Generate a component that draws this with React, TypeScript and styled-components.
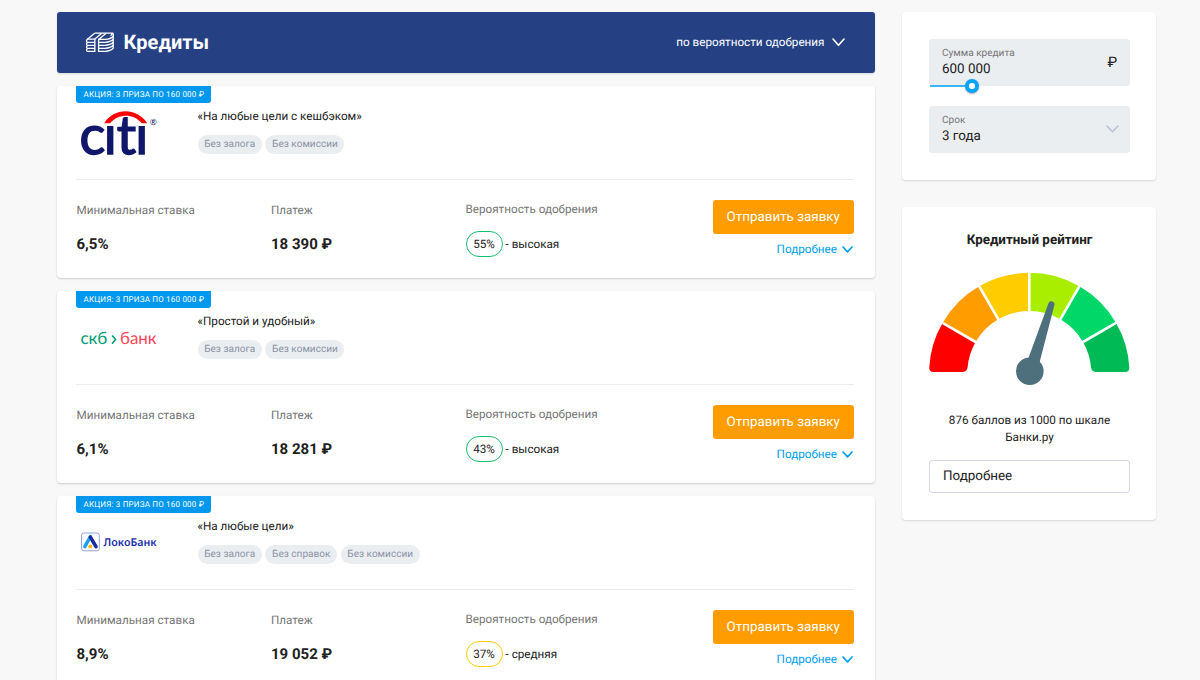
import React, {FunctionComponent, ReactNode} from 'react';
import styled, {createGlobalStyle} from 'styled-components';

interface OfferInterface {
  ID: string;
  logo: ReactNode;
  title: string;
  tags: string[];
  rate: string;
  payment: string;
  chance: number;
  chanceLabel: string;
  chanceColor: string;
}

interface ChevronProps {
  width: number;
  height: number;
  color: string;
  stroke: number;
}

const Chevron: FunctionComponent<ChevronProps> = ({width, height, color, stroke}) => (
  <svg width={width} height={height} viewBox={`0 0 ${width} ${height}`} fill="none">
    <path
      d={`M1 1L${width / 2} ${height - 1.2}L${width - 1} 1`}
      stroke={color}
      strokeWidth={stroke}
      strokeLinecap="round"
      strokeLinejoin="round"
    />
  </svg>
);

const MoneyIcon: FunctionComponent = () => (
  <svg width="30" height="21" viewBox="0 0 30 21" fill="none" stroke="#fff" strokeWidth="1.3" strokeLinejoin="round" strokeLinecap="round">
    <path d="M2.4 7.2L9 1.7Q9.6 1.2 10.4 1.2H27.7L26 3.4" />
    <path d="M2.4 7.2H9.6L16.4 1.6M13.6 7.6L20.8 1.6M13.6 7.4H20C24 7.2 26.8 5.8 28.2 4.2V1.3" />
    <path d="M9.8 7.3V19.4M13.6 7.5V19.4" />
    <path d="M2.4 7.4C1.2 8.2 1.2 9.7 2.4 10.4H9.6M2.4 10.6C1.2 11.4 1.2 12.8 2.4 13.4H9.6M2.4 13.6C1.2 14.4 1.2 15.8 2.4 16.4H9.6M2.4 16.6C1.2 17.4 1.2 18.8 2.4 19.4H9.6" />
    <path d="M13.8 10.4H20C24 10.2 26.8 8.9 28.2 7.3M13.8 13.4H20C24 13.2 26.8 11.9 28.2 10.3M13.8 16.4H20C24 16.2 26.8 14.9 28.2 13.3M13.8 19.4H20C24 19.2 26.8 17.9 28.2 16.3V4.2" />
  </svg>
);

const CitiLogo: FunctionComponent = () => (
  <svg width="82" height="72" viewBox="0 -11 82 72">
    <CitiText x="2.4 26.8 39.8 58.2" y="43.6">
      citi
    </CitiText>
    {/* the arc stands in for the dots of both letters */}
    <path d="M24 0H40V14.8H24ZM57.4 0H72V14.8H57.4Z" fill="#fff" />
    <path d="M27.2 13.2C37 -2.6 60 -2.6 70.2 13.2H64.8C56 3.4 42 3.4 33 13.2Z" fill="#fe0002" />
    <LogoText x="72.8" y="15" fontSize="8.5" fill="#10176b">
      ®
    </LogoText>
  </svg>
);

const SkbLogo: FunctionComponent = () => (
  <svg width="82" height="30" viewBox="0 -4 82 30">
    <LogoText x="3.4" y="15.4" fontSize="17" textLength="27" lengthAdjust="spacingAndGlyphs" fill="#009b77">
      скб
    </LogoText>
    <path d="M35 6.4L38.6 10.6L35 14.8" fill="none" stroke="#009b77" strokeWidth="1.6" />
    <LogoText x="43" y="15.4" fontSize="17" textLength="36.6" lengthAdjust="spacingAndGlyphs" fill="#fb4657">
      банк
    </LogoText>
  </svg>
);

const LokoLogo: FunctionComponent = () => (
  <svg width="82" height="26" viewBox="0 0 82 26">
    <rect x="4.5" y="1" width="17.8" height="17.8" rx="2.4" fill="#fff" stroke="#8fa4df" />
    <path d="M7.8 14.6L13.4 4.6" stroke="#1b9df0" strokeWidth="3.4" strokeLinecap="round" />
    <path d="M13.4 5.2L19 14.6" stroke="#1a2b9f" strokeWidth="3.6" strokeLinecap="round" />
    <circle cx="13.3" cy="14.4" r="1.9" fill="#ffb400" />
    <LokoText x="26.6" y="14" textLength="53" lengthAdjust="spacingAndGlyphs">
      ЛокоБанк
    </LokoText>
  </svg>
);

const OFFERS: OfferInterface[] = [
  {
    ID: 'citi',
    logo: <CitiLogo />,
    title: '«На любые цели с кешбэком»',
    tags: ['Без залога', 'Без комиссии'],
    rate: '6,5%',
    payment: '18 390 ₽',
    chance: 55,
    chanceLabel: 'высокая',
    chanceColor: '#17bf6c'
  },
  {
    ID: 'skb',
    logo: <SkbLogo />,
    title: '«Простой и удобный»',
    tags: ['Без залога', 'Без комиссии'],
    rate: '6,1%',
    payment: '18 281 ₽',
    chance: 43,
    chanceLabel: 'высокая',
    chanceColor: '#17bf6c'
  },
  {
    ID: 'loko',
    logo: <LokoLogo />,
    title: '«На любые цели»',
    tags: ['Без залога', 'Без справок', 'Без комиссии'],
    rate: '8,9%',
    payment: '19 052 ₽',
    chance: 37,
    chanceLabel: 'средняя',
    chanceColor: '#ffcb05'
  }
];

const GAUGE_COLORS = ['#ff0000', '#ff9c00', '#ffcc00', '#a9ee00', '#00d769', '#00ba55'];
const GAUGE_CENTER = 101;
const GAUGE_OUTER = 100.2;
const GAUGE_INNER = 62;

function gaugePoint(radius: number, degrees: number) {
  const angle = (degrees * Math.PI) / 180;

  return `${(GAUGE_CENTER - radius * Math.cos(angle)).toFixed(2)} ${(GAUGE_CENTER - radius * Math.sin(angle)).toFixed(2)}`;
}

function gaugeSector(index: number) {
  const from = index * 30;
  const to = from + 30;

  // the outermost sectors have rounded feet
  if (index === 0) {
    return `M${gaugePoint(GAUGE_OUTER, 3)}A${GAUGE_OUTER} ${GAUGE_OUTER} 0 0 1 ${gaugePoint(GAUGE_OUTER, to)}L${gaugePoint(GAUGE_INNER, to)}A${GAUGE_INNER} ${GAUGE_INNER} 0 0 0 ${gaugePoint(GAUGE_INNER, 5)}Q38.6 99.9 34.5 99.9H4.8Q1 99.9 ${gaugePoint(GAUGE_OUTER, 3)}Z`;
  }

  if (index === 5) {
    return `M${gaugePoint(GAUGE_OUTER, from)}A${GAUGE_OUTER} ${GAUGE_OUTER} 0 0 1 ${gaugePoint(GAUGE_OUTER, 177)}Q201 99.9 197.2 99.9H167.5Q163.4 99.9 ${gaugePoint(GAUGE_INNER, 175)}A${GAUGE_INNER} ${GAUGE_INNER} 0 0 0 ${gaugePoint(GAUGE_INNER, from)}Z`;
  }

  return `M${gaugePoint(GAUGE_OUTER, from)}A${GAUGE_OUTER} ${GAUGE_OUTER} 0 0 1 ${gaugePoint(GAUGE_OUTER, to)}L${gaugePoint(GAUGE_INNER, to)}A${GAUGE_INNER} ${GAUGE_INNER} 0 0 0 ${gaugePoint(GAUGE_INNER, from)}Z`;
}

const Gauge: FunctionComponent = () => (
  <svg width="202" height="116" viewBox="0.7 0 202 116">
    {GAUGE_COLORS.map((color, index) => (
      <path key={color} d={gaugeSector(index)} fill={color} />
    ))}
    {[30, 60, 90, 120, 150].map((angle) => (
      <path key={angle} d={`M${gaugePoint(GAUGE_INNER - 2, angle)}L${gaugePoint(GAUGE_OUTER + 2, angle)}`} stroke="#fff" strokeWidth="2.6" />
    ))}
    <path d="M99.8 87L120.1 31.6A3 3 0 0 1 126 33.4L111.1 91Z" fill="#4e707c" />
    <circle cx="101.5" cy="99.2" r="13.8" fill="#4e707c" />
  </svg>
);

const Offer: FunctionComponent<{offer: OfferInterface}> = ({offer}) => (
  <OfferCard>
    <PromoTag>АКЦИЯ: 3 ПРИЗА ПО 160 000 ₽</PromoTag>
    <OfferHead>
      <LogoHolder>{offer.logo}</LogoHolder>
      <OfferInfo>
        <OfferTitle>{offer.title}</OfferTitle>
        <TagList>
          {offer.tags.map((tag) => (
            <Tag key={tag}>{tag}</Tag>
          ))}
        </TagList>
      </OfferInfo>
    </OfferHead>
    <OfferBody>
      <Metric>
        <MetricLabel>Минимальная ставка</MetricLabel>
        <MetricValue>{offer.rate}</MetricValue>
      </Metric>
      <Metric>
        <MetricLabel>Платеж</MetricLabel>
        <MetricValue>{offer.payment}</MetricValue>
      </Metric>
      <ChanceMetric>
        <MetricLabel>Вероятность одобрения</MetricLabel>
        <Chance>
          <ChanceBadge $color={offer.chanceColor}>{offer.chance}%</ChanceBadge>- {offer.chanceLabel}
        </Chance>
      </ChanceMetric>
      <Actions>
        <ApplyButton>Отправить заявку</ApplyButton>
        <DetailsLink>
          Подробнее
          <Chevron width={11} height={7} color="#00a0f0" stroke={1.7} />
        </DetailsLink>
      </Actions>
    </OfferBody>
  </OfferCard>
);

const App: FunctionComponent = () => (
  <>
    <GlobalStyle />
    <Page>
      <Main>
        <Header>
          <MoneyIcon />
          <HeaderTitle>Кредиты</HeaderTitle>
          <SortButton>
            по вероятности одобрения
            <Chevron width={13} height={8.5} color="#fff" stroke={1.6} />
          </SortButton>
        </Header>
        {OFFERS.map((offer) => (
          <Offer key={offer.ID} offer={offer} />
        ))}
      </Main>
      <Aside>
        <FilterPanel>
          <Field>
            <FieldContent>
              <FieldLabel>Сумма кредита</FieldLabel>
              <FieldValue>600 000</FieldValue>
            </FieldContent>
            <Currency>₽</Currency>
            <SliderTrack>
              <SliderThumb />
            </SliderTrack>
          </Field>
          <Field>
            <FieldContent>
              <FieldLabel>Срок</FieldLabel>
              <FieldValue>3 года</FieldValue>
            </FieldContent>
            <Chevron width={13} height={8} color="#b9c0cf" stroke={1.5} />
          </Field>
        </FilterPanel>
        <RatingPanel>
          <RatingTitle>Кредитный рейтинг</RatingTitle>
          <Gauge />
          <RatingText>
            876 баллов из 1000 по шкале
            <br />
            Банки.ру
          </RatingText>
          <RatingButton>Подробнее</RatingButton>
        </RatingPanel>
      </Aside>
    </Page>
  </>
);

export default App;

const GlobalStyle = createGlobalStyle`
  * {
    box-sizing: border-box;
  }

  body {
    margin: 0;
    background: #f8f8f8;
    color: #212121;
    font-family: Roboto, sans-serif;
    text-rendering: geometricPrecision;
    overflow: hidden;
  }

  svg {
    display: block;
    flex: none;
  }

  button {
    font-family: inherit;
    text-rendering: inherit;
  }
`;

const LogoText = styled.text`
  font-family: Lato, sans-serif;
`;

const CitiText = styled(LogoText)`
  font-size: 54px;
  fill: #10176b;
  stroke: #10176b;
  stroke-width: 1.5px;
`;

const LokoText = styled.text`
  font-family: 'Noto Sans', sans-serif;
  font-size: 10.8px;
  font-weight: 600;
  fill: #1a2fae;
`;

const Page = styled.div`
  display: flex;
  align-items: flex-start;
  gap: 27px;
  height: 680px;
  padding: 12px 0 0 57px;
  overflow: hidden;
`;

const Main = styled.main`
  display: flex;
  flex-direction: column;
  gap: 13px;
  width: 818px;
`;

const Header = styled.header`
  display: flex;
  align-items: center;
  height: 61px;
  padding: 0 30.5px 1px 28px;
  border-radius: 3px;
  background: #254184;
  color: #fff;
  box-shadow: 0 1px 2px rgba(0, 0, 0, 0.12);
`;

const HeaderTitle = styled.h1`
  flex: 1;
  margin: 0 0 0 8.5px;
  font-size: 20px;
  font-weight: 700;
  line-height: 26px;
`;

const SortButton = styled.div`
  display: flex;
  align-items: center;
  gap: 7px;
  font-size: 11.7px;
`;

const OfferCard = styled.section`
  display: flex;
  flex-direction: column;
  flex: none;
  height: 192px;
  padding: 0 21px 0 19px;
  border-radius: 4px;
  background: #fff;
  box-shadow: 0 1px 2px rgba(0, 0, 0, 0.18);
`;

const PromoTag = styled.div`
  align-self: flex-start;
  width: 134.5px;
  height: 16.5px;
  padding: 0 7.5px;
  border-radius: 0 0 3px 3px;
  background: #0098ee;
  color: #fff;
  font-size: 8px;
  line-height: 17px;
  letter-spacing: 0.2px;
  white-space: nowrap;
`;

const OfferHead = styled.div`
  display: flex;
  height: 77.5px;
  border-bottom: 1px solid #ececec;
`;

const LogoHolder = styled.div`
  display: flex;
  align-items: center;
  width: 121.5px;
  height: 64px;
  padding-left: 1px;
`;

const OfferInfo = styled.div`
  padding-top: 5.5px;
`;

const OfferTitle = styled.div`
  font-size: 11.7px;
  line-height: 16px;
`;

const TagList = styled.div`
  display: flex;
  gap: 3.5px;
  margin-top: 10.5px;
`;

const Tag = styled.span`
  height: 19.5px;
  padding: 0 6.7px;
  border-radius: 10px;
  background: #ebeef1;
  color: #8a93a6;
  font-size: 10.05px;
  line-height: 19px;
  white-space: nowrap;
`;

const OfferBody = styled.div`
  display: flex;
  padding: 20px 0 0 0.5px;
`;

const Metric = styled.div`
  width: 194.5px;
  padding-top: 1px;
`;

const ChanceMetric = styled(Metric)`
  padding-top: 0;
`;

const MetricLabel = styled.div`
  color: #757575;
  font-size: 11.7px;
  line-height: 18px;
  white-space: nowrap;
`;

const MetricValue = styled.div`
  margin-top: 15px;
  font-size: 15px;
  font-weight: 700;
  line-height: 20px;
`;

const Chance = styled.div`
  display: flex;
  align-items: center;
  gap: 3px;
  margin-top: 13px;
  font-size: 11.7px;
`;

const ChanceBadge = styled.span<{$color: string}>`
  width: 37px;
  height: 26px;
  border: 1px solid ${({$color}) => $color};
  border-radius: 13px;
  font-size: 11.7px;
  line-height: 24px;
  text-align: center;
`;

const Actions = styled.div`
  display: flex;
  flex-direction: column;
  align-items: flex-end;
  margin-left: auto;
`;

const ApplyButton = styled.button`
  width: 141.5px;
  height: 34px;
  padding: 0;
  border: 0;
  border-radius: 3px;
  background: #ff9c00;
  color: #fff;
  font-size: 13.4px;
  white-space: nowrap;
`;

const DetailsLink = styled.div`
  display: flex;
  align-items: center;
  gap: 5px;
  margin: 7px 1px 0 0;
  color: #00a0f0;
  font-size: 11.7px;
  line-height: 16px;
`;

const Aside = styled.aside`
  display: flex;
  flex-direction: column;
  gap: 27px;
  width: 254px;
`;

const Panel = styled.section`
  padding: 27px 26px 27px 27px;
  border-radius: 4px;
  background: #fff;
  box-shadow: 0 1px 2px rgba(0, 0, 0, 0.14);
`;

const FilterPanel = styled(Panel)`
  display: flex;
  flex-direction: column;
  gap: 20.5px;
  height: 168px;
`;

const Field = styled.div`
  position: relative;
  display: flex;
  align-items: center;
  height: 46.5px;
  padding: 0 11px 0 13px;
  border-radius: 3px;
  background: #ebeef1;
`;

const FieldContent = styled.div`
  flex: 1;
  padding-top: 1px;
`;

const FieldLabel = styled.div`
  color: #757575;
  font-size: 10.05px;
  line-height: 14px;
`;

const FieldValue = styled.div`
  font-size: 13.4px;
  line-height: 18px;
`;

const Currency = styled.div`
  margin-right: 2px;
  font-size: 14.5px;
`;

const SliderTrack = styled.div`
  position: absolute;
  left: 1px;
  bottom: -1px;
  width: 36px;
  height: 1.5px;
  background: #38b6fb;
`;

const SliderThumb = styled.div`
  position: absolute;
  top: -6px;
  right: -12.5px;
  width: 13.5px;
  height: 13.5px;
  border: 4px solid #00a4fb;
  border-radius: 50%;
  background: #fff;
  box-shadow: 0 1px 2px rgba(0, 0, 0, 0.3);
`;

const RatingPanel = styled(Panel)`
  display: flex;
  flex-direction: column;
  align-items: center;
  height: 312.5px;
`;

const RatingTitle = styled.h2`
  margin: -2px 0 0;
  font-size: 13.4px;
  font-weight: 700;
  line-height: 18px;

  & + svg {
    margin-top: 22px;
  }
`;

const RatingText = styled.div`
  margin-top: 24px;
  font-size: 11.7px;
  line-height: 17px;
  text-align: center;
  white-space: nowrap;
`;

const RatingButton = styled.button`
  width: 201px;
  height: 33.5px;
  margin-top: 14px;
  padding: 1px 13px 0;
  border: 1px solid #d5d8e2;
  border-radius: 3px;
  background: #fff;
  color: #212121;
  font-size: 13.4px;
  text-align: left;
`;
